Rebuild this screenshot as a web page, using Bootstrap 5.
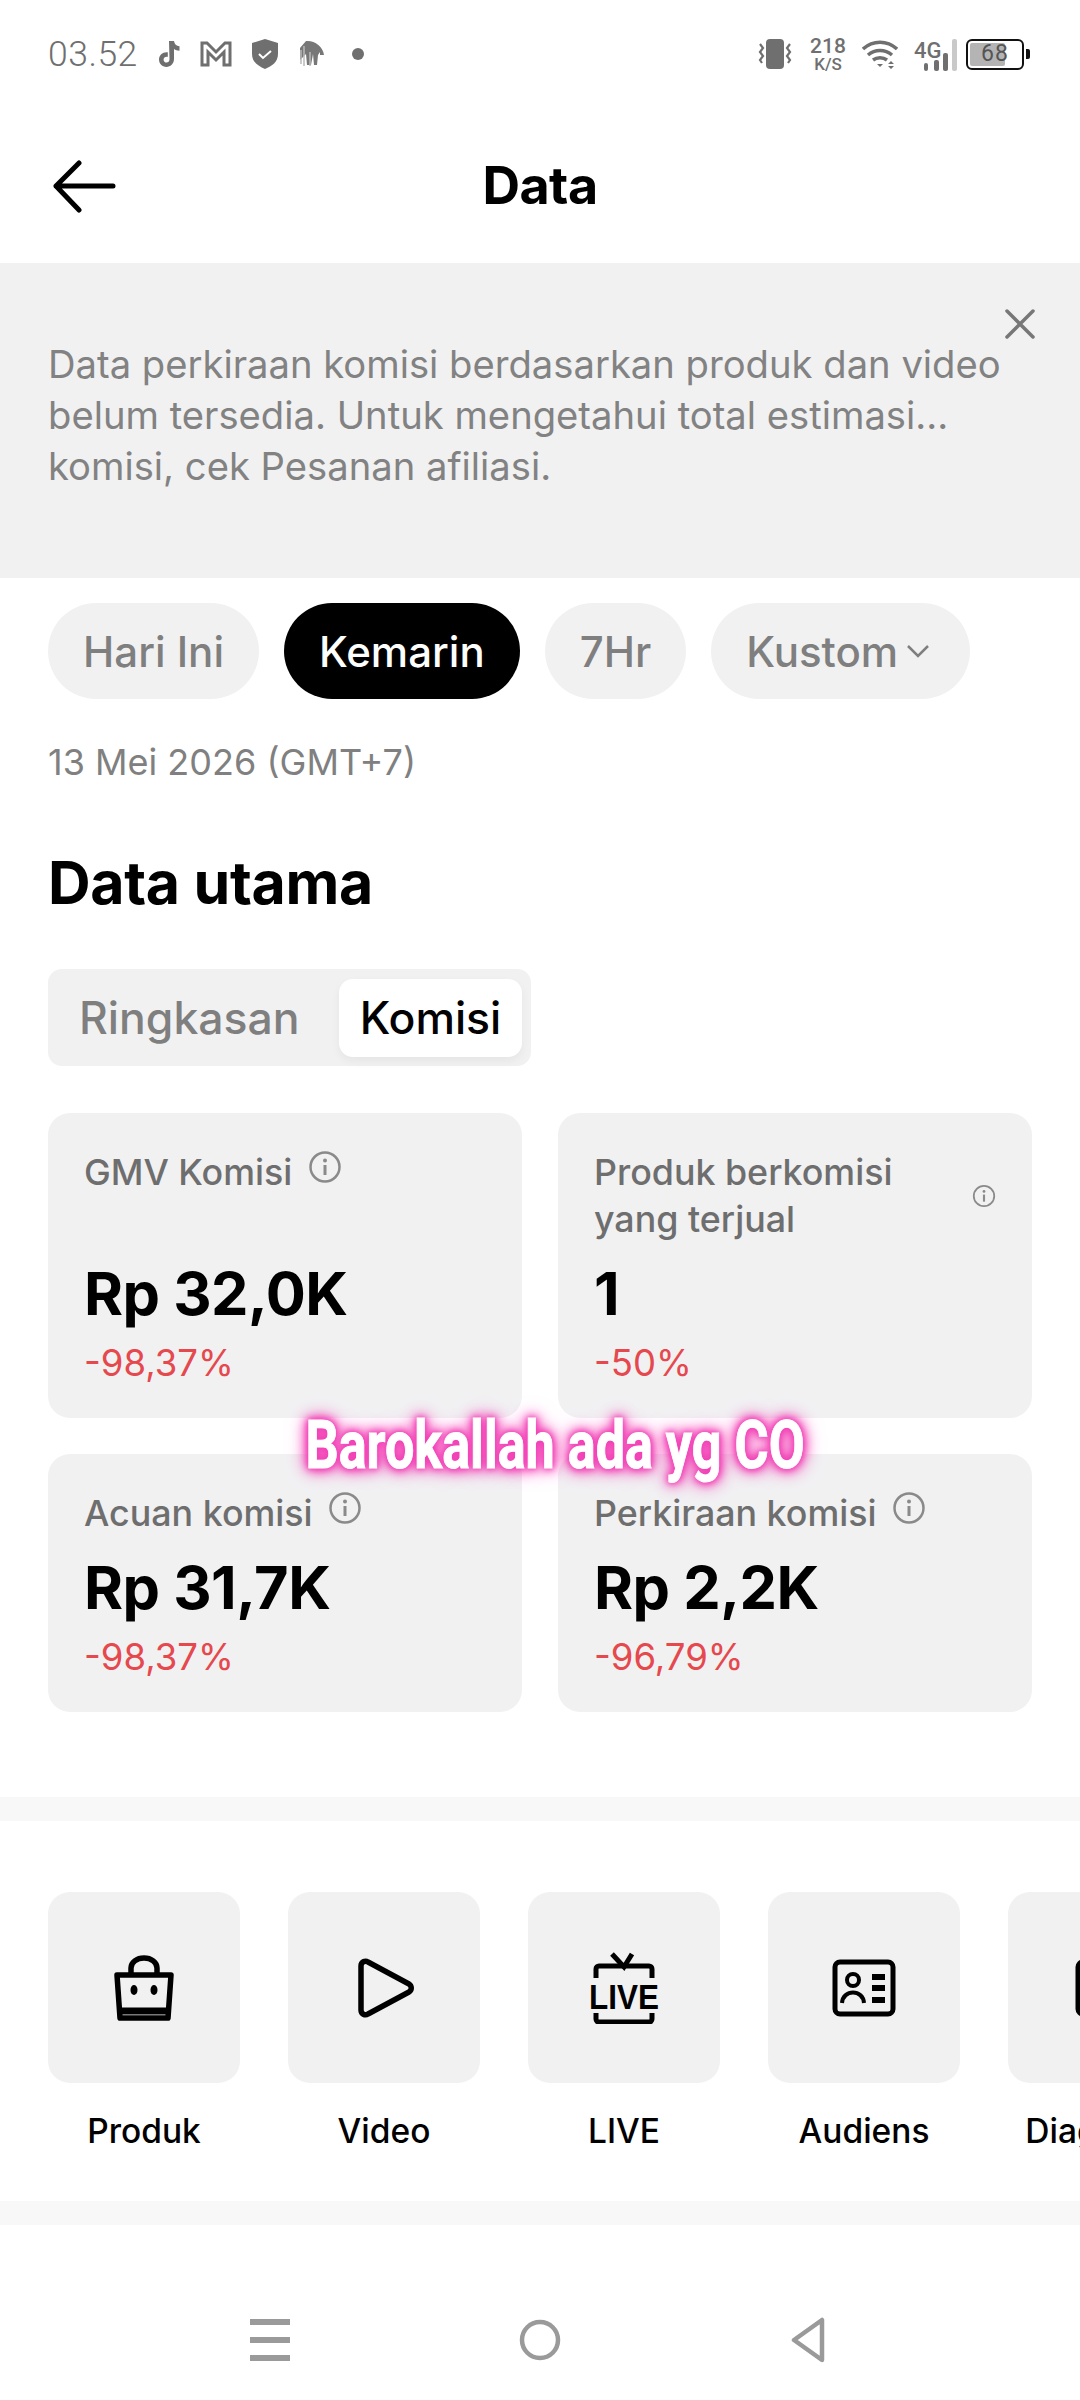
<!DOCTYPE html>
<html lang="id">

<head>
  <meta charset="UTF-8">
  <meta name="viewport" content="width=device-width, initial-scale=1.0">
  <title>Data</title>
  <link href="https://cdn.jsdelivr.net/npm/bootstrap@5.3.3/dist/css/bootstrap.min.css" rel="stylesheet" />
  <style>
    body { margin: 0; background: #fff; font-family: Inter, "Liberation Sans", sans-serif; color: #000; }
    .screen { width: 1080px; height: 2400px; overflow: hidden; position: relative; background: #fff; }

    .status-bar { height: 108px; padding: 0 50px 0 48px; color: #6f6f6f; }
    .status-time { font: 300 35.500px Roboto, sans-serif; letter-spacing: .5px; margin-right: 19px; }
    .status-left svg { margin-right: 19px; }
    .speed { font: 500 17px/17px Roboto, sans-serif; text-align: center; width: 36px; }
    .speed b { font-size: 21px; font-weight: 500; display: block; line-height: 20px; }
    .batt { width: 58px; height: 31px; border: 2.500px solid #111; border-radius: 6px; padding: 2px; position: relative; font: 400 23px/22px Roboto, sans-serif; color: #555; text-align: center; letter-spacing: 1px; }
    .batt-fill { position: absolute; left: 2px; top: 2px; bottom: 2px; width: 65%; background: #b4b4b4; border-radius: 2px; }
    .batt-num { position: relative; }
    .batt-nub { width: 4px; height: 10px; background: #111; border-radius: 0 2px 2px 0; margin-left: 2px; }

    .top-bar { height: 155px; padding: 0 48px; position: relative; }
    .top-title { font-size: 52px; font-weight: 700; letter-spacing: -.5px; }
    .back-btn { position: absolute; left: 52px; top: 52px; }

    .notice { height: 315px; background: #f1f1f2; padding: 76px 48px 0; position: relative; color: #828282; font-size: 38.200px; line-height: 51px; }
    .notice-close { position: absolute; right: 44px; top: 45px; }

    .range-row { padding: 25px 48px 0; gap: 25px; }
    .range-pill { height: 96px; border-radius: 48px; padding: 0 35px; background: #f1f1f2; color: #7f7f7f; font-size: 42px; font-weight: 500; display: flex; align-items: center; }
    .range-pill.on { background: #000; color: #fff; }
    .range-pill.more { padding-right: 40px; }
    .range-date { font-size: 36px; color: #808080; margin: 41px 48px 0; line-height: 44px; }
    .main-title { font-size: 59px; font-weight: 700; margin: 64px 48px 0; line-height: 70px; letter-spacing: -.3px; }

    .seg { width: 483px; height: 97px; margin: 51px 48px 0; background: #f1f1f2; border-radius: 14px; padding: 10px 9px 9px 31px; font-size: 44.500px; font-weight: 500; color: #7f7f7f; }
    .seg-on { width: 183px; height: 78px; background: #fff; color: #000; border-radius: 14px; margin-left: auto; box-shadow: 0 4px 10px rgba(0,0,0,.05); }

    .stat-grid { display: grid; grid-template-columns: 474px 474px; gap: 36px 36px; padding: 47px 48px 0; grid-template-rows: 305px 258px; }
    .stat-box { background: #f1f1f2; border-radius: 22px; padding: 36px 36px 0; }
    .stat-label { font-size: 35.800px; font-weight: 500; color: #6e6e6e; line-height: 47px; height: 47px; margin-bottom: 13px; }
    .stat-label svg { margin-left: 6px; }
    .stat-tall { height: 94px; margin-bottom: 13px; }
    .stat-val { font-size: 59.500px; font-weight: 700; line-height: 74px; letter-spacing: -.5px; }
    .stat-pct { font-size: 36.500px; color: #e5484d; line-height: 50px; margin-top: 8px; }

    .gap-band { height: 24px; background: #f8f8f8; }
    .band-first { margin-top: 85px; }
    .tile-strip { padding: 71px 0 0 48px; gap: 48px; height: 380px; width: 1300px; }
    .tile-item { width: 192px; text-align: center; }
    .tile-box { height: 191px; background: #f1f1f2; border-radius: 22px; display: flex; align-items: center; justify-content: center; }
    .tile-label { font-size: 33.500px; font-weight: 500; margin-top: 28px; line-height: 40px; white-space: nowrap; }

    .nav-bar { height: 176px; padding-top: 54px; }
    .nav-slot { width: 270px; text-align: center; }

    .caption { position: absolute; left: 0; width: 1110px; top: 1409px; text-align: center; color: #fff; font: 700 66px/74px Roboto, "Liberation Sans", sans-serif; transform: scaleX(.79); -webkit-text-stroke: 1px #fff; text-shadow: 0 0 6px #f23fb5, 0 0 9px #f23fb5, 0 0 13px #f23fb5, 0 0 17px #f23fb5, 0 0 24px #f56cc8; }
  </style>
</head>

<body>
  <div class="screen">
    <div class="status-bar d-flex align-items-center justify-content-between">
      <div class="status-left d-flex align-items-center">
        <span class="status-time">03.52</span>
        <svg width="24" height="28" viewBox="0 0 24 28" fill="#6f6f6f"><path d="M12 1h5c.4 3 2.300 5 5.500 5.300v4.500c-2.200 0-4-.6-5.500-1.700v10c0 4.800-3.600 7.900-7.600 7.900C5.300 27 2 23.800 2 19.600c0-4.600 4-8 8.800-7.300v4.700c-2.300-.7-4.200.7-4.200 2.700 0 1.700 1.300 2.900 2.900 2.900 1.700 0 3-1.300 3-3.300z" /></svg>
        <svg width="32" height="26" viewBox="0 0 32 26" fill="none" stroke="#6f6f6f" stroke-width="3"><path d="M2 24V2h5l9 9 9-9h5v22h-6V11l-8 8-8-8v13z" /></svg>
        <svg width="28" height="30" viewBox="0 0 28 30"><path d="M14 0l13 4v11c0 8-6 12-13 15C7 27 1 23 1 15V4z" fill="#6f6f6f" /><path d="M8 15l4 4 8-7" fill="none" stroke="#fff" stroke-width="2" /></svg>
        <svg width="26" height="28" viewBox="0 0 26 28"><path d="M8 1c8-1 17 5 18 14h-4v-3l-2 3-1 10h-3l-1-11-2 11H9L8 14 2 20V8z" fill="#777" /><path d="M3 10v14M6 6v20M12 12v14" stroke="#bbb" stroke-width="1.500" /></svg>
        <svg width="14" height="14" viewBox="0 0 14 14" class="ms-2"><circle cx="7" cy="7" r="6" fill="#6f6f6f" /></svg>
      </div>
      <div class="d-flex align-items-center">
        <svg width="38" height="32" viewBox="0 0 38 32" class="me-3"><rect x="10" y="1" width="18" height="30" rx="4" fill="#6f6f6f" /><path d="M4 6l3 4-3 4 3 4-3 4 2 3M34 6l-3 4 3 4-3 4 3 4-2 3" fill="none" stroke="#6f6f6f" stroke-width="2.200" /></svg>
        <div class="speed me-3"><b>218</b>K/S</div>
        <svg width="36" height="30" viewBox="0 0 36 30" class="me-3"><path d="M1 10c10-9 24-9 34 0M6 16c7-6 17-6 24 0M11 21c4-3 10-3 14 0" fill="none" stroke="#6f6f6f" stroke-width="3.500" /><path d="M15 25h6l-3 3z" fill="#6f6f6f" /><path d="M29 22l3 3h-6zM29 30l3-3h-6z" fill="#6f6f6f" /></svg>
        <svg width="44" height="34" viewBox="0 0 44 34" class="me-2">
          <text x="0" y="21" font-family="Roboto, sans-serif" font-size="22" font-weight="500" fill="#6f6f6f">4G</text>
          <rect x="10" y="26" width="4" height="8" rx="2" fill="#6f6f6f" /><rect x="20" y="23" width="5" height="11" rx="2" fill="#6f6f6f" /><rect x="29" y="16" width="5" height="18" rx="2" fill="#6f6f6f" /><rect x="38" y="2" width="5" height="32" rx="2" fill="#c9c9c9" />
        </svg>
        <div class="batt"><div class="batt-fill"></div><span class="batt-num">68</span></div>
        <div class="batt-nub"></div>
      </div>
    </div>

    <div class="top-bar d-flex align-items-center justify-content-center">
      <svg class="back-btn" width="64" height="54" viewBox="0 0 64 54" fill="none" stroke="#000" stroke-width="5" stroke-linecap="round" stroke-linejoin="round"><path d="M27 3L4 26l23 24M4 26h57" /></svg>
      <span class="top-title">Data</span>
    </div>

    <div class="notice">
      <svg class="notice-close" width="32" height="32" viewBox="0 0 32 32" stroke="#777" stroke-width="3.500" stroke-linecap="round"><path d="M3 3l26 26M29 3L3 29" /></svg>
      Data perkiraan komisi berdasarkan produk dan video<br>belum tersedia. Untuk mengetahui total estimasi...<br>komisi, cek Pesanan afiliasi.
    </div>

    <div class="range-row d-flex">
      <div class="range-pill">Hari Ini</div>
      <div class="range-pill on">Kemarin</div>
      <div class="range-pill">7Hr</div>
      <div class="range-pill more">Kustom
        <svg class="ms-2" width="24" height="14" viewBox="0 0 24 14" fill="none" stroke="#7f7f7f" stroke-width="2.500"><path d="M2 2l10 10 10-10" /></svg>
      </div>
    </div>
    <div class="range-date">13 Mei 2026 (GMT+7)</div>
    <div class="main-title">Data utama</div>

    <div class="seg d-flex align-items-center">
      <span>Ringkasan</span>
      <div class="seg-on d-flex align-items-center justify-content-center">Komisi</div>
    </div>

    <div class="stat-grid">
      <div class="stat-box">
        <div class="stat-label stat-tall">GMV Komisi <svg width="34" height="34" viewBox="0 0 34 34" class="align-text-top"><use href="#info" /></svg></div>
        <div class="stat-val">Rp 32,0K</div>
        <div class="stat-pct">-98,37%</div>
      </div>
      <div class="stat-box">
        <div class="stat-label stat-tall d-flex align-items-center justify-content-between">
          <span>Produk berkomisi<br>yang terjual</span>
          <svg width="24" height="24" viewBox="0 0 34 34"><use href="#info" /></svg>
        </div>
        <div class="stat-val">1</div>
        <div class="stat-pct">-50%</div>
      </div>
      <div class="stat-box">
        <div class="stat-label">Acuan komisi <svg width="34" height="34" viewBox="0 0 34 34" class="align-text-top"><use href="#info" /></svg></div>
        <div class="stat-val">Rp 31,7K</div>
        <div class="stat-pct">-98,37%</div>
      </div>
      <div class="stat-box">
        <div class="stat-label">Perkiraan komisi <svg width="34" height="34" viewBox="0 0 34 34" class="align-text-top"><use href="#info" /></svg></div>
        <div class="stat-val">Rp 2,2K</div>
        <div class="stat-pct">-96,79%</div>
      </div>
    </div>

    <div class="gap-band band-first"></div>

    <div class="tile-strip d-flex">
      <div class="tile-item">
        <div class="tile-box">
          <svg width="60" height="66" viewBox="0 0 60 66" fill="none" stroke="#000" stroke-width="5.500" stroke-linejoin="round"><path d="M17 20v-7a13 10 0 0 1 26 0v7" /><path d="M3 20h54l-3 43H6z" /><ellipse cx="20" cy="35" rx="3.500" ry="5" fill="#000" stroke="none" /><ellipse cx="40" cy="35" rx="3.500" ry="5" fill="#000" stroke="none" /><path d="M6 56h48" stroke-width="7" /></svg>
        </div>
        <div class="tile-label">Produk</div>
      </div>
      <div class="tile-item">
        <div class="tile-box">
          <svg class="ms-1" width="58" height="62" viewBox="0 0 58 62" fill="none" stroke="#000" stroke-width="5.500" stroke-linejoin="round"><path d="M4 9c0-4 4-6 7-4l41 22c3 2 3 6 0 8L11 57c-3 2-7 0-7-4z" /></svg>
        </div>
        <div class="tile-label">Video</div>
      </div>
      <div class="tile-item">
        <div class="tile-box">
          <svg width="76" height="72" viewBox="-2 0 76 72" fill="none" stroke="#000" stroke-width="5"><path d="M24 2l12 13L44 2" /><path d="M8 26v-9a3 3 0 0 1 3-3h50a3 3 0 0 1 3 3v9M8 61v6a3 3 0 0 0 3 3h50a3 3 0 0 0 3-3v-6" /><text x="36" y="57" text-anchor="middle" textLength="70" lengthAdjust="spacingAndGlyphs" font-family="Liberation Sans, sans-serif" font-weight="700" font-size="35" fill="#000" stroke="none">LIVE</text></svg>
        </div>
        <div class="tile-label">LIVE</div>
      </div>
      <div class="tile-item">
        <div class="tile-box">
          <svg width="64" height="58" viewBox="0 0 64 58" fill="none" stroke="#000" stroke-width="5"><rect x="3" y="3" width="58" height="52" rx="5" /><circle cx="21" cy="21" r="6" stroke-width="4" /><path d="M10 44c1-14 21-14 22 0" stroke-width="4" /><path d="M40 18h13M40 29h13M40 41h13" stroke-width="6" /></svg>
        </div>
        <div class="tile-label">Audiens</div>
      </div>
      <div class="tile-item">
        <div class="tile-box justify-content-start">
          <svg class="ms-5" width="64" height="58" viewBox="0 0 64 58" fill="none" stroke="#000" stroke-width="5"><rect x="22" y="3" width="58" height="52" rx="5" /></svg>
        </div>
        <div class="tile-label">Diagnosis</div>
      </div>
    </div>

    <div class="gap-band"></div>

    <div class="nav-bar d-flex align-items-center justify-content-center">
      <div class="nav-slot">
        <svg width="40" height="42" viewBox="0 0 40 42" fill="#9a9a9a"><rect width="40" height="6" /><rect y="18" width="40" height="6" /><rect y="36" width="40" height="6" /></svg>
      </div>
      <div class="nav-slot">
        <svg width="42" height="42" viewBox="0 0 42 42" fill="none" stroke="#9a9a9a" stroke-width="4.500"><circle cx="21" cy="21" r="18" /></svg>
      </div>
      <div class="nav-slot">
        <svg width="38" height="46" viewBox="0 0 38 46" fill="none" stroke="#9a9a9a" stroke-width="4.500" stroke-linejoin="round"><path d="M31 3v40L3 23z" /></svg>
      </div>
    </div>

    <div class="caption">Barokallah ada yg CO</div>
  </div>

  <svg width="0" height="0" class="d-block">
    <symbol id="info" viewBox="0 0 34 34">
      <circle cx="17" cy="17" r="14.500" fill="none" stroke="#8a8a8a" stroke-width="2.500" />
      <circle cx="17" cy="10.500" r="2" fill="#8a8a8a" />
      <rect x="15.500" y="15" width="3" height="10" fill="#8a8a8a" />
    </symbol>
  </svg>

  <script src="https://cdn.jsdelivr.net/npm/bootstrap@5.3.3/dist/js/bootstrap.bundle.min.js"></script>
</body>

</html>
